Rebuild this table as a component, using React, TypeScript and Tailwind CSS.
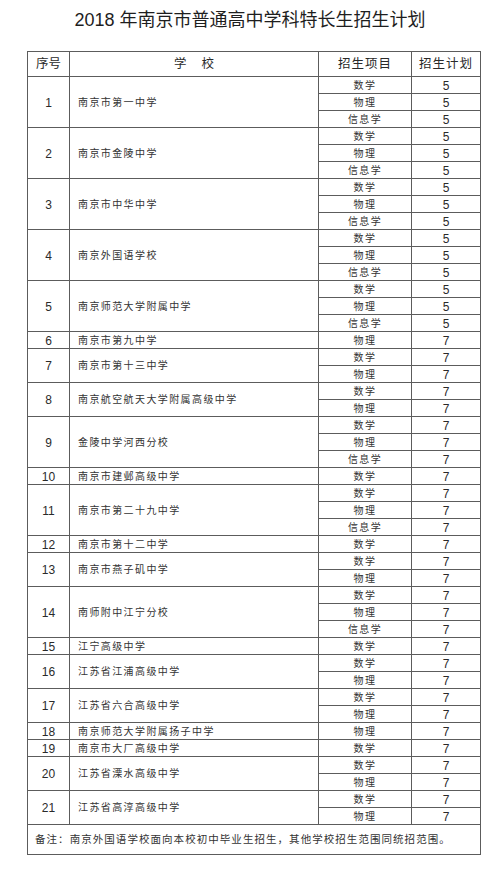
type School = { name: string; items: [string, number][] };

const M = "数学";
const P = "物理";
const I = "信息学";

const SCHOOLS: School[] = [
  { name: "南京市第一中学", items: [[M, 5], [P, 5], [I, 5]] },
  { name: "南京市金陵中学", items: [[M, 5], [P, 5], [I, 5]] },
  { name: "南京市中华中学", items: [[M, 5], [P, 5], [I, 5]] },
  { name: "南京外国语学校", items: [[M, 5], [P, 5], [I, 5]] },
  { name: "南京师范大学附属中学", items: [[M, 5], [P, 5], [I, 5]] },
  { name: "南京市第九中学", items: [[P, 7]] },
  { name: "南京市第十三中学", items: [[M, 7], [P, 7]] },
  { name: "南京航空航天大学附属高级中学", items: [[M, 7], [P, 7]] },
  { name: "金陵中学河西分校", items: [[M, 7], [P, 7], [I, 7]] },
  { name: "南京市建邺高级中学", items: [[M, 7]] },
  { name: "南京市第二十九中学", items: [[M, 7], [P, 7], [I, 7]] },
  { name: "南京市第十二中学", items: [[M, 7]] },
  { name: "南京市燕子矶中学", items: [[M, 7], [P, 7]] },
  { name: "南师附中江宁分校", items: [[M, 7], [P, 7], [I, 7]] },
  { name: "江宁高级中学", items: [[M, 7]] },
  { name: "江苏省江浦高级中学", items: [[M, 7], [P, 7]] },
  { name: "江苏省六合高级中学", items: [[M, 7], [P, 7]] },
  { name: "南京师范大学附属扬子中学", items: [[P, 7]] },
  { name: "南京市大厂高级中学", items: [[M, 7]] },
  { name: "江苏省溧水高级中学", items: [[M, 7], [P, 7]] },
  { name: "江苏省高淳高级中学", items: [[M, 7], [P, 7]] },
];

const cell = "border border-[#5c5c5c] p-0";

export default function App() {
  return (
    <div className="w-[500px] h-[870px] bg-white text-[#2a2a2a] font-['Liberation_Sans','Noto_Sans_CJK_SC',sans-serif]">
      <h1 className="pt-[7px] text-center text-[18px] leading-[26px] font-normal text-[#1e1e1e]">
        2018 年南京市普通高中学科特长生招生计划
      </h1>
      <table className="mt-[18px] ml-[27px] w-[453px] table-fixed border-collapse">
        <colgroup>
          <col className="w-[42px]" />
          <col className="w-[249px]" />
          <col className="w-[93px]" />
          <col className="w-[69px]" />
        </colgroup>
        <thead>
          <tr className="h-[25px] text-[12.5px]">
            <th className={`${cell} font-normal`}>序号</th>
            <th className={`${cell} font-normal`}>
              <span>学</span>
              <span className="ml-[15px]">校</span>
            </th>
            <th className={`${cell} font-normal tracking-[1px]`}>招生项目</th>
            <th className={`${cell} font-normal tracking-[1px]`}>招生计划</th>
          </tr>
        </thead>
        <tbody>
          {SCHOOLS.map((s, si) =>
            s.items.map(([item, n], ii) => (
              <tr key={`${si}-${ii}`} className="h-[17px] leading-[15px]">
                {ii === 0 && (
                  <>
                    <td
                      rowSpan={s.items.length}
                      className={`${cell} pt-[2px] text-center text-[12px] leading-[13px]`}
                    >
                      {si + 1}
                    </td>
                    <td
                      rowSpan={s.items.length}
                      className={`${cell} pl-[8px] pt-[1px] text-[10px] leading-[14px] tracking-[1.4px] text-[#333]`}
                    >
                      {s.name}
                    </td>
                  </>
                )}
                <td className={`${cell} text-center text-[10px] tracking-[1.4px] text-[#333]`}>
                  {item}
                </td>
                <td className={`${cell} pt-[1px] text-center text-[12px] leading-[14px]`}>{n}</td>
              </tr>
            )),
          )}
          <tr className="h-[30px]">
            <td colSpan={4} className={`${cell} pl-[7px] text-[10.5px] tracking-[1.05px] text-[#333]`}>
              备注：南京外国语学校面向本校初中毕业生招生，其他学校招生范围同统招范围。
            </td>
          </tr>
        </tbody>
      </table>
    </div>
  );
}
